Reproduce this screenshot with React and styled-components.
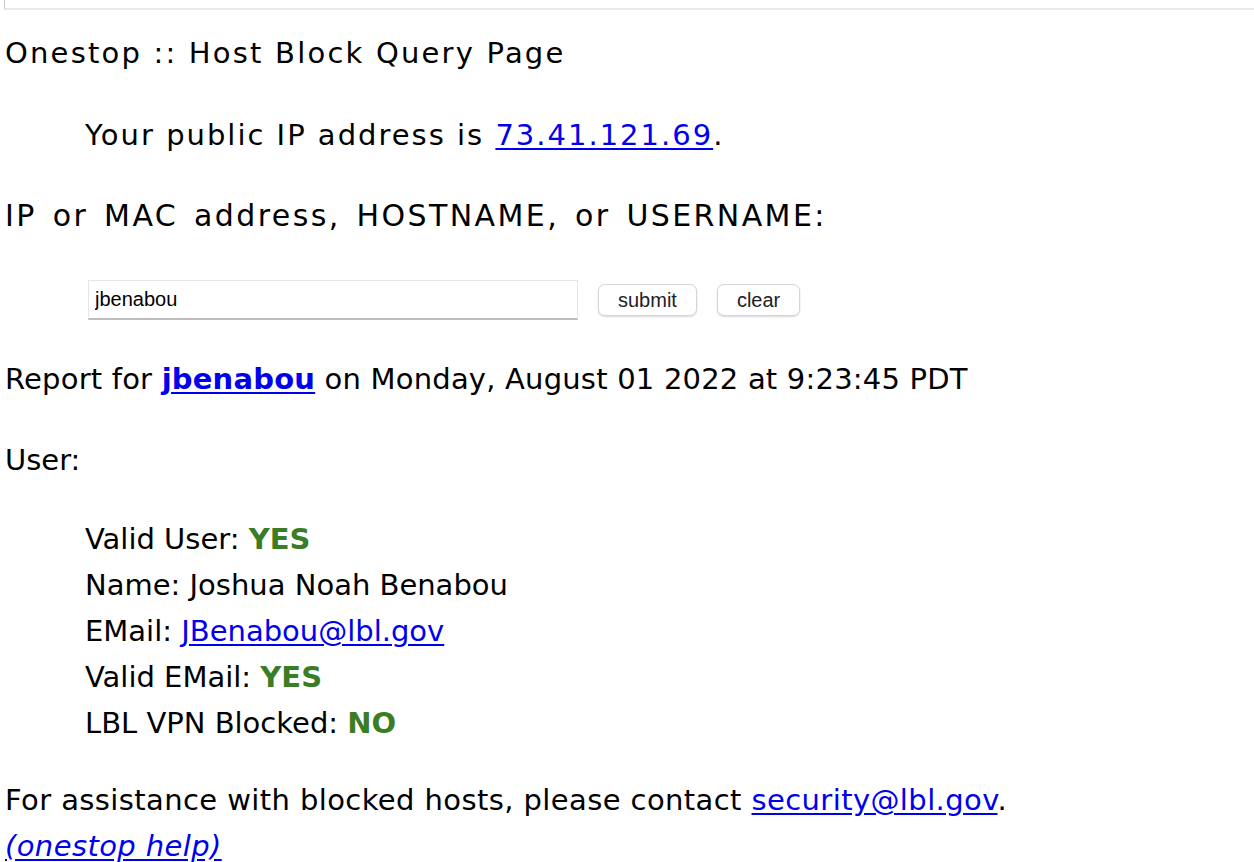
import React from "react";
import styled, { createGlobalStyle } from "styled-components";

const GlobalStyle = createGlobalStyle`
  html, body {
    margin: 0;
    padding: 0;
    background: #ffffff;
  }
  body {
    font-family: "DejaVu Sans", "Liberation Sans", sans-serif;
    font-size: 29px;
    color: #000000;
  }
`;

const Page = styled.div`
  padding: 0 0 0 5px;
  line-height: 46px;
`;

const TopFrame = styled.div`
  height: 8px;
  margin-left: -1px;
  border-left: 1px solid #c8c8c8;
  border-bottom: 2px solid #e8e8e8;
`;

const Title = styled.div`
  margin-top: 20px;
  letter-spacing: 2.2px;
`;

const Block = styled.div`
  margin-top: ${(p) => p.gap || 35}px;
  padding-left: ${(p) => (p.indent ? 80 : 0)}px;
  font-size: ${(p) => p.size || 29}px;
  letter-spacing: ${(p) => p.spacing || 0}px;
  word-spacing: ${(p) => p.words || 0}px;
`;

const Link = styled.a`
  color: #0000ee;
  text-decoration: underline;
  text-underline-offset: 3px;
  font-weight: ${(p) => (p.bold ? 700 : 400)};
  font-style: ${(p) => (p.italic ? "italic" : "normal")};
`;

const Status = styled.span`
  color: #3a7d24;
  font-weight: 700;
`;

const Form = styled.form`
  display: flex;
  align-items: center;
  gap: 20px;
  margin-top: 41px;
  padding-left: 83px;
  height: 40px;
`;

const TextInput = styled.input`
  box-sizing: border-box;
  width: 490px;
  height: 40px;
  padding: 0 6px;
  border: 1px solid #e6e6e6;
  border-bottom: 2px solid #bdbdbd;
  outline: none;
  font-family: "Liberation Sans", Arial, sans-serif;
  font-size: 20px;
  color: #000;
`;

const Button = styled.button`
  box-sizing: border-box;
  height: 32px;
  padding: 0 19px;
  background: #ffffff;
  border: 1px solid #d6d6d6;
  border-radius: 7px;
  box-shadow: 0 1px 2px rgba(0, 0, 0, 0.15);
  font-family: "Liberation Sans", Arial, sans-serif;
  font-size: 20px;
  color: #222;
`;

const List = styled.div`
  margin-top: 33px;
  padding-left: 80px;
`;

const Row = styled.div``;

export default function App() {
  return (
    <>
      <GlobalStyle />
      <Page>
        <TopFrame />
        <Title>Onestop :: Host Block Query Page</Title>
        <Block gap={36} indent spacing={2}>
          Your public IP address is <Link href="#">73.41.121.69</Link>.
        </Block>
        <Block size={30} spacing={2.4} words={4}>
          IP or MAC address, HOSTNAME, or USERNAME:
        </Block>
        <Form onSubmit={(e) => e.preventDefault()}>
          <TextInput defaultValue="jbenabou" />
          <Button type="submit">submit</Button>
          <Button type="button">clear</Button>
        </Form>
        <Block gap={36} spacing={0.2}>
          Report for <Link href="#" bold>jbenabou</Link> on Monday, August 01
          2022 at 9:23:45 PDT
        </Block>
        <Block>User:</Block>
        <List>
          <Row>
            Valid User: <Status>YES</Status>
          </Row>
          <Row>Name: Joshua Noah Benabou</Row>
          <Row>
            EMail: <Link href="#">JBenabou@lbl.gov</Link>
          </Row>
          <Row>
            Valid EMail: <Status>YES</Status>
          </Row>
          <Row>
            LBL VPN Blocked: <Status>NO</Status>
          </Row>
        </List>
        <Block gap={31} spacing={0.4}>
          For assistance with blocked hosts, please contact{" "}
          <Link href="#">security@lbl.gov</Link>.
          <br />
          <Link href="#" italic>(onestop help)</Link>
        </Block>
      </Page>
    </>
  );
}
